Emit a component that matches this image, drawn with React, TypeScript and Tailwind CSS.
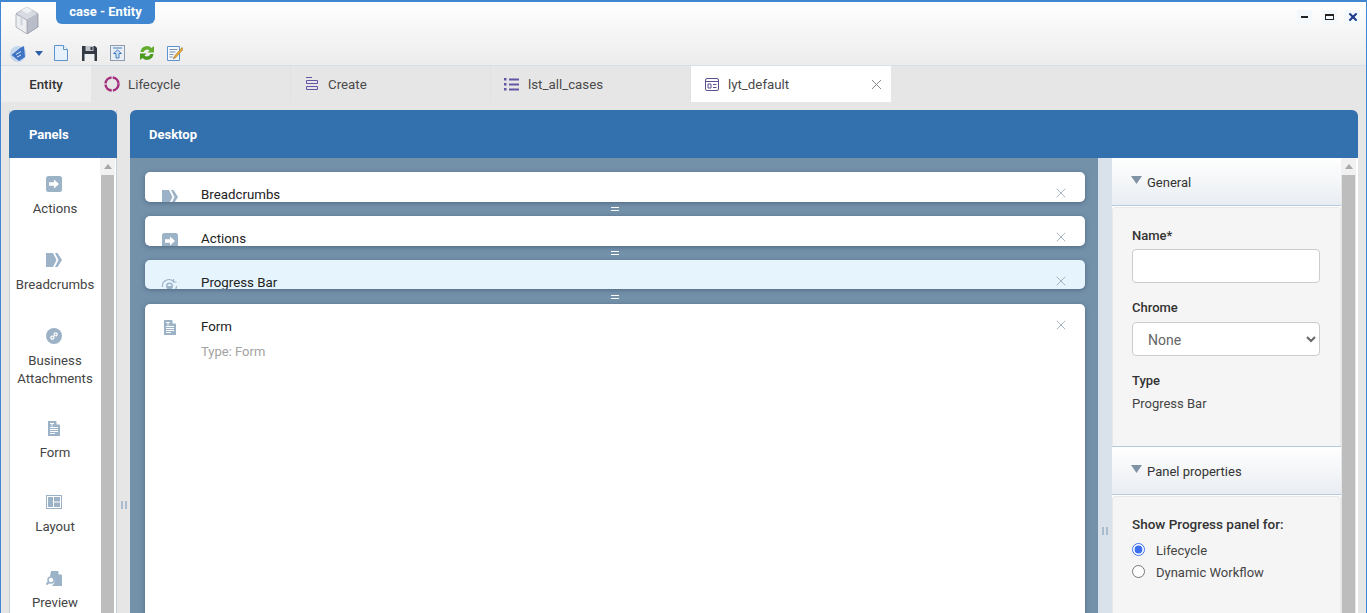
import React from "react";
import { X } from "lucide-react";

const iconBlue = "#9cb2c7";

function ActionsIcon() {
  return (
    <svg width="16" height="16" viewBox="0 0 16 16">
      <rect width="16" height="16" rx="2.5" fill={iconBlue} />
      <path d="M3 6.3h5V3.4L13 8l-5 4.6V9.7H3z" fill="#fff" />
    </svg>
  );
}

function CrumbsIcon() {
  return (
    <svg width="16" height="14" viewBox="0 0 16 14">
      <path d="M0 0h7l3.500 7L7 14H0z" fill={iconBlue} />
      <path d="M9 0h2.500l4.500 7-4.500 7H9l3.500-7z" fill={iconBlue} />
    </svg>
  );
}

function AttachIcon() {
  return (
    <svg width="16" height="16" viewBox="0 0 16 16">
      <circle cx="8" cy="8" r="8" fill={iconBlue} />
      <path d="M6.800 9.200 9.200 6.800M6.400 7.600 5 9a1.500 1.500 0 0 0 2 2l1.400-1.400M9.600 8.400 11 7a1.500 1.500 0 0 0-2-2L7.600 6.400" stroke="#fff" strokeWidth="1.300" fill="none" />
    </svg>
  );
}

function FormIcon() {
  return (
    <svg width="12" height="15" viewBox="0 0 12 15">
      <path d="M0 0h8l4 4v11H0z" fill={iconBlue} />
      <path d="M8.500 0 12 3.500H8.500z" fill="#fff" />
      <path d="M2 2.500h4M4 2.500v3M2 6.500h8M2 8.500h8M2 10.500h8M2 12.500h5" stroke="#fff" strokeWidth="1" />
    </svg>
  );
}

function LayoutIcon() {
  return (
    <svg width="16" height="14" viewBox="0 0 16 14">
      <path d="M0 0h16v14H0z" fill={iconBlue} />
      <path d="M1 1h14v12H1z" fill="#fff" />
      <path d="M2 2h5v10H2zM8 2h6v4.500H8zM8 7.500h6V12H8z" fill={iconBlue} />
    </svg>
  );
}

function PreviewIcon() {
  return (
    <svg width="16" height="15" viewBox="0 0 16 15">
      <path d="M5 0h7l4 4v11H6l2-2.500A4.500 4.500 0 0 0 4 5.500z" fill={iconBlue} />
      <path d="M12.500 0 16 3.500h-3.500z" fill="#fff" />
      <circle cx="5" cy="9" r="3" fill="#fff" stroke={iconBlue} strokeWidth="1.500" />
      <path d="M3 11 .5 13.500" stroke={iconBlue} strokeWidth="2" />
    </svg>
  );
}

function ProgressIcon() {
  return (
    <svg width="17" height="16" viewBox="0 0 17 16">
      <path d="M1.500 9a6.500 6.500 0 0 1 11-5.500M15.500 8a6.500 6.500 0 0 1-11 4.500" stroke={iconBlue} strokeWidth="1.200" fill="none" />
      <circle cx="8.500" cy="8" r="3.500" fill={iconBlue} />
      <path d="M8.500 5.500 11 8H6z" fill="#e6f4fd" />
      <path d="M12.500 1v3h3" stroke={iconBlue} strokeWidth="1.200" fill="none" />
    </svg>
  );
}

function Logo() {
  return (
    <svg width="24" height="27" viewBox="0 0 24 27">
      <path d="M12 13 23 7v13l-11 7z" fill="#b9bdc9" />
      <path d="M12 13 1 7v13l11 7z" fill="#eceef2" stroke="#9599a6" strokeWidth=".7" />
      <path d="M12 0 23 6.500 12 13 1 6.500z" fill="#d8dbe2" stroke="#a4a8b3" strokeWidth=".7" />
      <path d="M12 0 17.500 3.200 12 6.500 6.500 3.200z" fill="#eef0f3" />
      <path d="M6.500 9.500v9" stroke="#cfd2da" strokeWidth="2" />
      <path d="M23 7v13l-11 7" fill="none" stroke="#858996" strokeWidth=".7" />
    </svg>
  );
}

function Toolbar() {
  return (
    <div className="flex items-center h-[30px] pl-[9px]">
      <svg width="17" height="17" viewBox="0 0 17 17">
        <circle cx="8" cy="9" r="8" fill="#c5d7ee" />
        <path d="M1.500 10 10 3l4-2 1 11-6 4z" fill="#3f74c4" />
        <path d="M6 9.500l5-3M7 12l4-2" stroke="#dbe7f7" strokeWidth="1" />
      </svg>
      <svg width="8" height="5" viewBox="0 0 8 5" className="ml-[8px]">
        <path d="M0 0h8L4 5z" fill="#2c5fa8" />
      </svg>
      <svg width="14" height="16" viewBox="0 0 14 16" className="ml-[11px]">
        <path d="M.5.500h9l4 4v11H.5z" fill="#e7f1fb" stroke="#5d94d0" />
        <path d="M9.500.500v4h4" fill="#fff" stroke="#5d94d0" />
      </svg>
      <svg width="15" height="15" viewBox="0 0 15 15" className="ml-[14px]">
        <path d="M0 0h13l2 2v13H0z" fill="#333a44" />
        <path d="M3.500 0h8v5h-8z" fill="#c3c7cd" />
        <path d="M8.500 1h2v3h-2z" fill="#333a44" />
        <path d="M2.500 8h10v7h-10z" fill="#eceef0" />
      </svg>
      <svg width="15" height="16" viewBox="0 0 15 16" className="ml-[13px]">
        <rect x=".5" y=".5" width="14" height="15" fill="#e9eef4" stroke="#8e9cae" />
        <path d="M3 3h9M7.500 5 3.500 8.500H6V13h3V8.500h2.500z" fill="#cfe1f4" stroke="#4780bd" />
      </svg>
      <svg width="16" height="16" viewBox="0 0 16 16" className="ml-[14px]">
        <path d="M1.500 7A6.500 6.500 0 0 1 12.500 3L15 1v6.500H8.500L10.500 5.500A3.800 3.800 0 0 0 4.500 7z" fill="#62ad2d" />
        <path d="M14.500 9A6.500 6.500 0 0 1 3.500 13L1 15V8.500h6.500L5.500 10.500A3.800 3.800 0 0 0 11.500 9z" fill="#4a9a1f" />
      </svg>
      <svg width="16" height="16" viewBox="0 0 16 16" className="ml-[12px]">
        <path d="M.5 1.500h12v14H.5z" fill="#f5f8fc" stroke="#5d94d0" />
        <path d="M2.500 4.500h8M2.500 7h6M2.500 9.500h4M2.500 12h3" stroke="#7f93aa" />
        <path d="M15 2.500 7.500 11 6 14l3-1.500L16 4.500z" fill="#e8a93a" stroke="#8a6a2a" strokeWidth=".5" />
      </svg>
    </div>
  );
}

function Tab(props: { label: string; icon: React.ReactNode; active?: boolean }) {
  return (
    <div className={"w-[200px] h-[36px] flex items-center " + (props.active ? "bg-white" : "border-r border-[#e1e1e1]")}>
      <div className="ml-[12px] w-[17px] flex justify-center">{props.icon}</div>
      <span className="ml-[8px] pt-[1px] text-[13.3px] text-[#4a4a4a]">{props.label}</span>
      {props.active && <X size={17} strokeWidth={1.2} className="ml-auto mr-[6px] text-[#777]" />}
    </div>
  );
}

function PanelItem(props: { icon: React.ReactNode; label: React.ReactNode; tight?: boolean }) {
  return (
    <div className={"pt-[18px] flex flex-col items-center " + (props.tight ? "pb-[14px]" : "pb-[16px]")}>
      <div className="h-[16px] flex items-center mr-[2px]">{props.icon}</div>
      <div className="mt-[8px] text-[13.2px] leading-[18px] text-[#444] text-center">{props.label}</div>
    </div>
  );
}

function Card(props: { label: string; icon: React.ReactNode; iconClass: string; selected?: boolean; tall?: boolean; last?: boolean }) {
  return (
    <div
      className={
        "relative rounded-[5px] overflow-hidden shadow-[0_1px_5px_rgba(50,75,100,0.55)] " +
        (props.selected ? "bg-[#e6f4fd] " : "bg-white ") +
        (props.tall ? "h-[600px]" : props.last ? "h-[29px]" : "h-[30px]")
      }
    >
      <div className="flex pt-[13px]">
        <div className="w-[56px] pl-[16px] flex"><div className={"w-[17px] flex justify-center " + props.iconClass}>{props.icon}</div></div>
        <div className="pt-[1px] text-[13.3px] leading-[18px] text-[#222]">{props.label}</div>
        <X size={16} strokeWidth={1.2} className="ml-auto mr-[16px] text-[#8fa3b5]" />
      </div>
      {props.tall && <div className="pl-[56px] mt-[7px] text-[13px] leading-[18px] text-[#a3a3a3]">Type: Form</div>}
    </div>
  );
}

function Handle(props: { tall?: boolean }) {
  return (
    <div className={"flex flex-col items-center justify-center gap-[2px] " + (props.tall ? "h-[15px]" : "h-[14px]")}>
      <div className="w-[8px] h-[1px] bg-white" />
      <div className="w-[8px] h-[1px] bg-white" />
    </div>
  );
}

function SectionHeader(props: { label: string }) {
  return (
    <div className="h-[48px] bg-gradient-to-b from-white to-[#e9edf2] border-b border-[#b4cadf] flex pl-[19px] pt-[17px]">
      <svg width="11" height="8" viewBox="0 0 11 8" className="mt-[1px]">
        <path d="M0 0h11L5.500 8z" fill="#8093a5" />
      </svg>
      <span className="ml-[5px] -mt-[1px] text-[13px] leading-[18px] text-[#333]">{props.label}</span>
    </div>
  );
}

function Grip() {
  return (
    <div className="flex gap-[2px]">
      <div className="w-[2px] h-[8px] bg-[#a9bccd]" />
      <div className="w-[2px] h-[8px] bg-[#a9bccd]" />
    </div>
  );
}

function Scrollbar() {
  return (
    <div className="w-[15px] shrink-0 flex flex-col items-center">
      <div className="h-[17px] w-full bg-[#f1f1f1] flex justify-center pt-[6px]">
        <svg width="8" height="5" viewBox="0 0 8 5"><path d="M4 0l4 5H0z" fill="#a8a8a8" /></svg>
      </div>
      <div className="flex-1 w-[13px] bg-[#bdbdbd]" />
    </div>
  );
}

export default function App() {
  return (
    <div className="h-[613px] overflow-hidden bg-[#e6e6e6] border-x border-t-2 border-[#3f87d0] font-['Roboto',sans-serif]">
      {/* title area */}
      <div className="h-[64px] bg-gradient-to-b from-white to-[#ececec] border-b border-[#d5dfe9]">
        <div className="h-[36px] flex">
          <div className="ml-[14px] mt-[5px]"><Logo /></div>
          <div className="ml-[17px] -mt-[2px] w-[99px] h-[24px] bg-[#3f87d0] rounded-b-[6px] flex items-center justify-center text-white text-[13px] font-bold">
            case - Entity
          </div>
          <div className="ml-auto mr-[6px] mt-[8px] flex gap-[4px]">
            <div className="w-[15px] h-[14px] bg-[#f3f8fc] flex items-center justify-center"><div className="w-[7px] h-[2px] bg-[#222]" /></div>
            <div className="ml-[6px] w-[15px] h-[14px] bg-[#f3f8fc] flex items-center justify-center"><div className="w-[9px] h-[6px] border border-t-2 border-[#222]" /></div>
            <div className="ml-[4px] w-[15px] h-[14px] bg-[#f3f8fc] flex items-center justify-center"><X size={12} strokeWidth={4} className="text-[#1e3a8a]" /></div>
          </div>
        </div>
        <Toolbar />
      </div>

      {/* tabs */}
      <div className="flex h-[36px]">
        <div className="w-[90px] h-[36px] bg-[#efefef] flex items-center justify-center pt-[1px] text-[13.3px] font-medium text-[#333]">Entity</div>
        <Tab
          label="Lifecycle"
          icon={
            <svg width="16" height="16" viewBox="0 0 16 16">
              <circle cx="8" cy="8" r="6.500" fill="none" stroke="#a5307f" strokeWidth="2.500" strokeDasharray="9 1.200" />
            </svg>
          }
        />
        <Tab
          label="Create"
          icon={
            <svg width="12" height="15" viewBox="0 0 12 15" fill="none" stroke="#6655a5">
              <path d="M0 .5h6" />
              <path d="M.5 3.500h11v3H.5zM.5 9.500h11v3H.5z" />
            </svg>
          }
        />
        <Tab
          label="lst_all_cases"
          icon={
            <svg width="15" height="13" viewBox="0 0 15 13" fill="#6655a5">
              <path d="M0 0h2.500v2.500H0zM0 5h2.500v2.500H0zM0 10h2.500v2.500H0zM5 .5h10v2H5zM5 5.500h10v2H5zM5 10.500h10v2H5z" />
            </svg>
          }
        />
        <Tab
          label="lyt_default"
          active
          icon={
            <svg width="14" height="13" viewBox="0 0 14 13" fill="none" stroke="#5a4f8f">
              <rect x=".5" y=".5" width="13" height="12" rx="1.500" />
              <path d="M.5 3.500h13M3 6h3v4H3zM8 6.500h3.500M8 9.500h3.500" />
            </svg>
          }
        />
      </div>

      {/* main */}
      <div className="flex pt-[8px] h-[600px]">
        <div className="w-[8px] shrink-0" />
        <div className="w-[108px] shrink-0 flex flex-col border-x border-[#c5cfd9]">
          <div className="h-[48px] -mx-[1px] bg-[#3370ae] rounded-t-[6px] flex items-center pl-[20px] pt-[1px] text-white text-[13px] font-bold">Panels</div>
          <div className="flex-1 flex bg-white">
            <div className="w-[90px] shrink-0">
              <PanelItem icon={<ActionsIcon />} label="Actions" />
              <PanelItem icon={<CrumbsIcon />} label="Breadcrumbs" />
              <PanelItem icon={<AttachIcon />} label={<>Business<br />Attachments</>} tight />
              <PanelItem icon={<FormIcon />} label="Form" tight />
              <PanelItem icon={<LayoutIcon />} label="Layout" />
              <PanelItem icon={<PreviewIcon />} label="Preview" />
            </div>
            <Scrollbar />
          </div>
        </div>
        <div className="w-[13px] shrink-0 flex justify-center pt-[391px]"><Grip /></div>

        <div className="w-[1228px] shrink-0 flex flex-col">
          <div className="h-[48px] bg-[#3370ae] rounded-t-[6px] flex items-center pl-[19px] pt-[1px] text-white text-[13px] font-bold">Desktop</div>
          <div className="flex-1 flex min-h-0">
            <div className="w-[968px] shrink-0 bg-[#7491aa] pl-[15px] pr-[13px] pt-[14px] overflow-hidden">
              <Card label="Breadcrumbs" icon={<CrumbsIcon />} iconClass="mt-[5px]" />
              <Handle />
              <Card label="Actions" icon={<ActionsIcon />} iconClass="mt-[4px]" />
              <Handle />
              <Card label="Progress Bar" icon={<ProgressIcon />} iconClass="mt-[5px]" selected last />
              <Handle tall />
              <Card label="Form" icon={<FormIcon />} iconClass="mt-[3px]" tall />
            </div>
            <div className="w-[14px] shrink-0 bg-[#d9e2ea] flex justify-center pt-[369px]"><Grip /></div>
            <div className="w-[229px] shrink-0 bg-white">
              <SectionHeader label="General" />
              <div className="h-[240px] bg-[#f5f5f5] border border-[#e8e8e8] rounded-[3px] mt-[1px] -mb-[1px] pl-[19px] pt-[19px]">
                <div className="text-[13px] leading-[18px] font-medium text-[#333]">Name*</div>
                <input className="block mt-[4px] w-[188px] h-[34px] bg-white border border-[#ccc] rounded-[4px]" />
                <div className="mt-[16px] text-[13px] leading-[18px] font-medium text-[#333]">Chrome</div>
                <select defaultValue="None" className="block mt-[5px] w-[188px] h-[34px] pl-[11px] pt-[1px] text-[14px] text-[#666] bg-white border border-[#ccc] rounded-[4px]">
                  <option>None</option>
                </select>
                <div className="mt-[16px] text-[13px] leading-[18px] font-medium text-[#333]">Type</div>
                <div className="mt-[5px] text-[13px] leading-[18px] text-[#444]">Progress Bar</div>
              </div>
              <div className="border-t border-[#b4cadf]"><SectionHeader label="Panel properties" /></div>
              <div className="h-[200px] bg-[#f5f5f5] border border-[#e8e8e8] rounded-[3px] mt-[1px] pl-[19px] pt-[18px]">
                <div className="text-[13.5px] leading-[18px] font-medium text-[#333]">Show Progress panel for:</div>
                <label className="mt-[7px] flex items-center h-[22px] text-[13px] text-[#444]">
                  <input type="radio" name="progress" defaultChecked className="w-[13px] h-[13px] -mt-[4px] accent-[#3b6ff0]" />
                  <span className="ml-[11px]">Lifecycle</span>
                </label>
                <label className="flex items-center h-[22px] text-[13px] text-[#444]">
                  <input type="radio" name="progress" className="w-[13px] h-[13px] -mt-[4px]" />
                  <span className="ml-[11px]">Dynamic Workflow</span>
                </label>
              </div>
            </div>
            <Scrollbar />
            <div className="w-[2px] shrink-0 bg-white" />
          </div>
        </div>
      </div>
    </div>
  );
}
